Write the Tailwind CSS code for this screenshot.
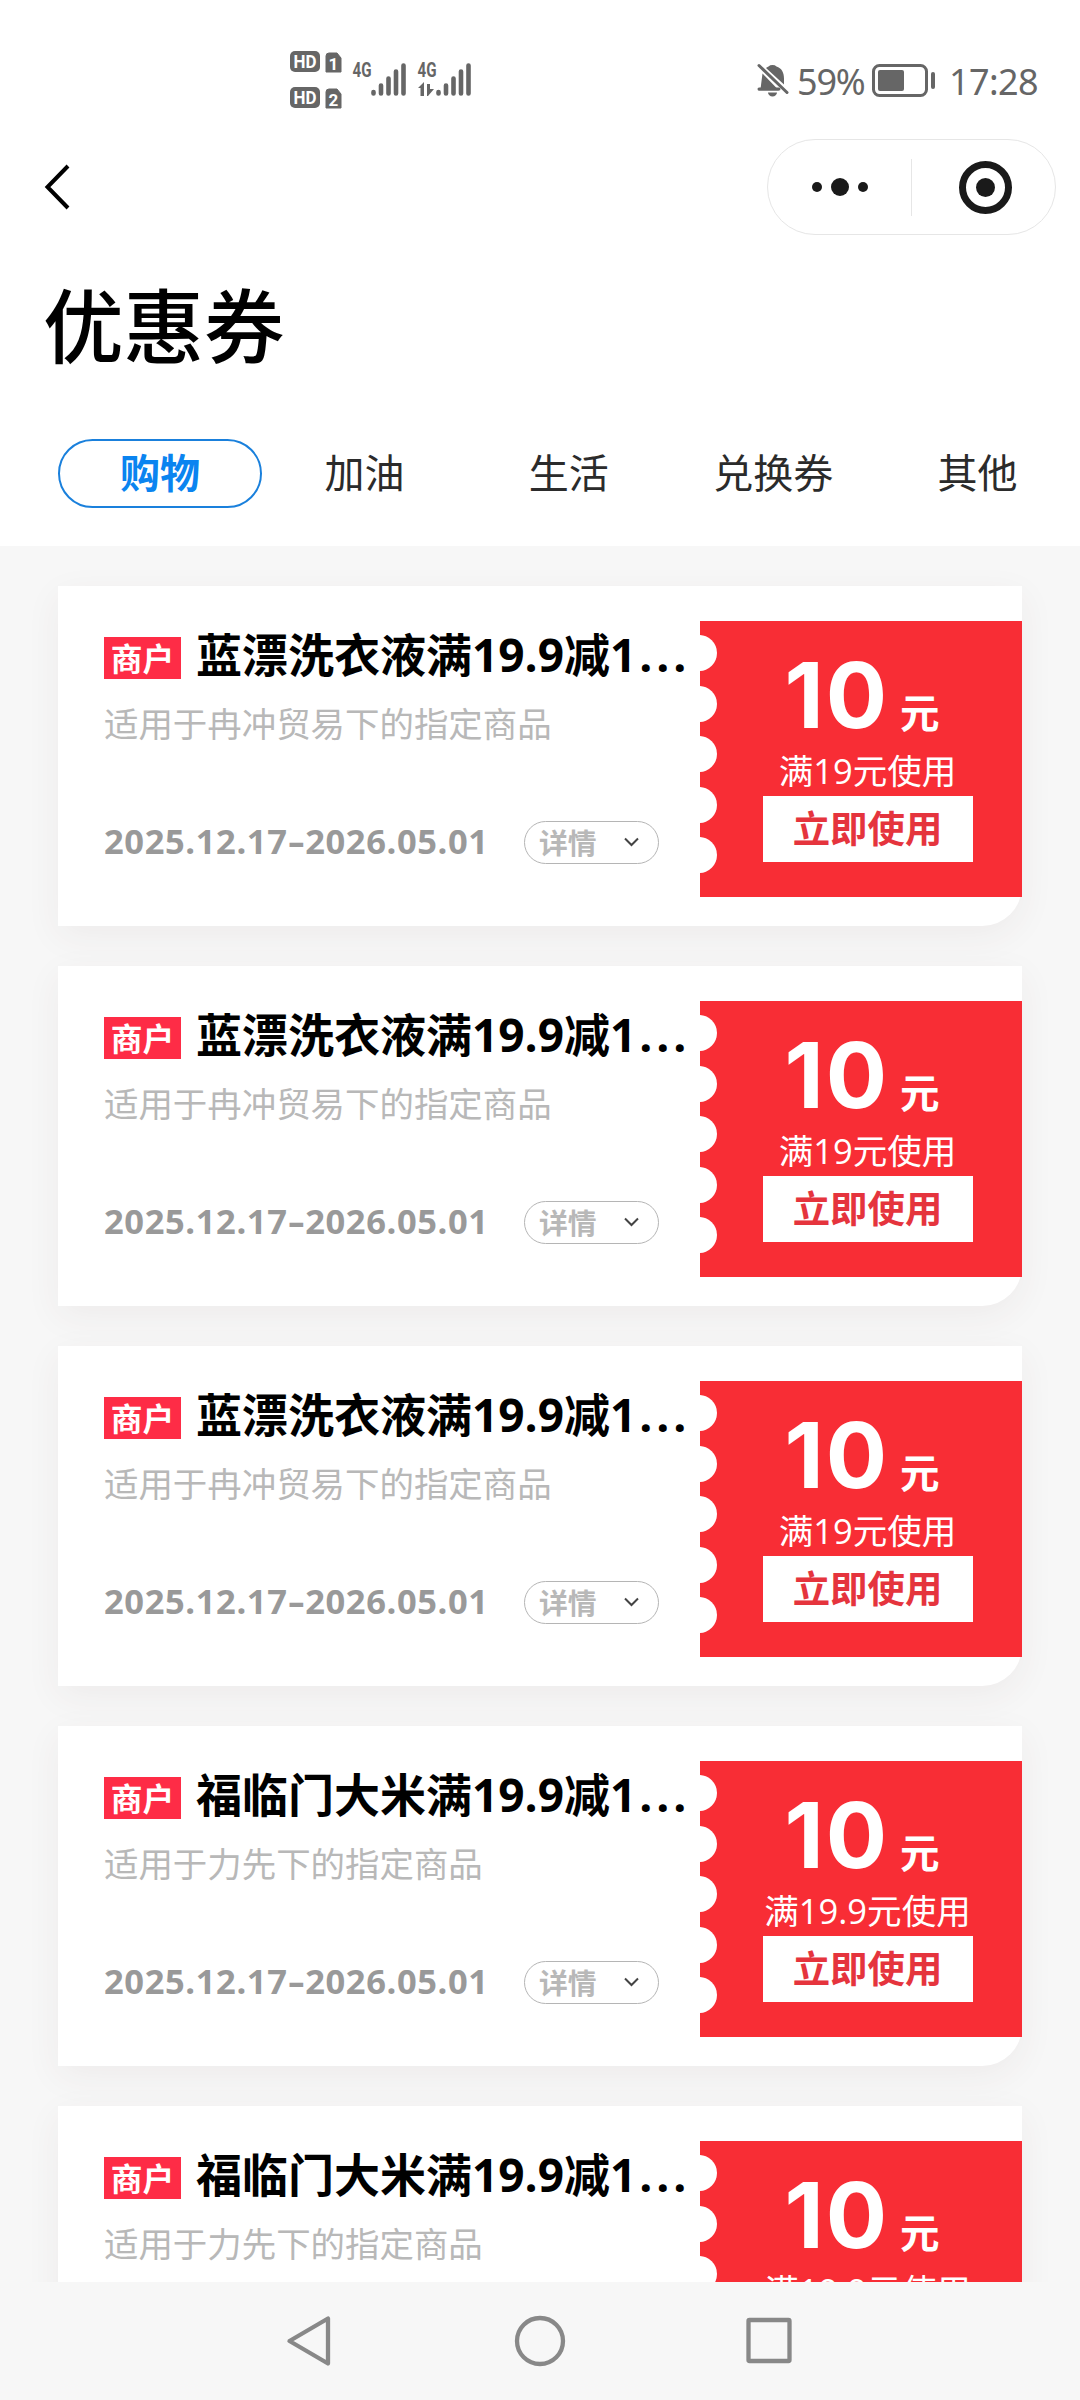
<!DOCTYPE html>
<html lang="zh-CN">
<head>
<meta charset="utf-8">
<title>优惠券</title>
<script src="https://cdn.jsdelivr.net/npm/@tailwindcss/browser@4"></script>
</head>
<body class="w-[1080px] h-[2400px] overflow-hidden bg-[#f7f7f7] font-['Open_Sans','Noto_Sans_CJK_SC',sans-serif] flex flex-col">

<header class="bg-white h-[546px] shrink-0 flex flex-col">
  <!-- status bar -->
  <div class="h-[139px] shrink-0 flex items-start text-[#666]">
    <svg class="ml-[290px] mt-[50px] w-[182px] h-[60px]" viewBox="0 0 182 60" fill="#666">
      <rect x="0" y="1" width="30" height="21" rx="5"/>
      <rect x="0" y="37" width="30" height="21" rx="5"/>
      <path d="M39 3h8l4 5v14h-15V6a3 3 0 0 1 3-3zM39 39h8l4 5v14h-15V42a3 3 0 0 1 3-3z" stroke="#666" stroke-linejoin="round"/>
      <g font-family="Roboto" font-weight="700" fill="#fff">
        <text x="3.500" y="18" font-size="19" textLength="23" lengthAdjust="spacingAndGlyphs">HD</text>
        <text x="3.500" y="54" font-size="19" textLength="23" lengthAdjust="spacingAndGlyphs">HD</text>
        <text x="38.500" y="19.500" font-size="17">1</text>
        <text x="38.500" y="55.500" font-size="17">2</text>
      </g>
      <g font-family="Roboto" font-weight="700" font-size="20">
        <text x="62.500" y="27" textLength="19" lengthAdjust="spacingAndGlyphs">4G</text>
        <text x="127.500" y="27" textLength="19" lengthAdjust="spacingAndGlyphs">4G</text>
      </g>
      <g stroke="#666" stroke-width="4.600" stroke-linecap="round">
        <path d="M83.500 42v1.500M91 35.500v8M98.500 28.500v15M106 21.500v22M113.500 15.500v28"/>
        <path d="M148.500 42v1.500M156 35.500v8M163.500 28.500v15M171 21.500v22M178.500 15.500v28"/>
      </g>
      <path d="M128 38l6-6v14h-3.500V38zM137 34h3v5h4l-6 7h-1z"/>
    </svg>
    <svg class="ml-[284px] mt-[62px] w-[34px] h-[38px]" viewBox="0 0 34 38" fill="#666">
      <path d="M4.500 27 6.500 11.500 23 28.500H2zM12.500 4.500a5 3.500 0 0 1 8 0c5 1.500 7.500 6 7.500 12v6L10 6c.6-.6 1.500-1.200 2.500-1.500zM12 30.500h9a4.500 4 0 0 1-9 0z"/>
      <path d="M3 3.500 31 30.500" stroke="#666" stroke-width="3" stroke-linecap="round"/>
      <path d="M3 27h20" stroke="#666" stroke-width="3" stroke-linecap="round"/>
    </svg>
    <span class="ml-[7px] mt-[56px] w-[69px] text-[36px] leading-[52px] font-normal tracking-[-1.200px] font-['Noto_Sans',sans-serif]">59%</span>
    <svg class="ml-[6px] mt-[64px] w-[64px] h-[34px]" viewBox="0 0 64 34" fill="none">
      <rect x="1.500" y="1.500" width="53" height="30" rx="6" stroke="#666" stroke-width="3"/>
      <rect x="6" y="6" width="26" height="21" rx="2" fill="#666"/>
      <path d="M61 10v13" stroke="#666" stroke-width="4" stroke-linecap="round"/>
    </svg>
    <span class="ml-[13px] mt-[56px] text-[36px] leading-[52px] font-normal tracking-[-0.600px] font-['Noto_Sans',sans-serif]">17:28</span>
  </div>
  <!-- navigation row -->
  <div class="h-[96px] shrink-0 flex items-center justify-between pl-[44px] pr-[24px]">
    <svg class="w-[28px] h-[48px]" viewBox="0 0 28 48" fill="none"><path d="M24 3 3.500 24 24 45" stroke="#000" stroke-width="4"/></svg>
    <div class="w-[289px] h-[96px] rounded-full border border-[#e6e6e6] flex items-center">
      <div class="w-[143px] flex items-center justify-center gap-[9px]">
        <i class="size-[10px] rounded-full bg-[#1a1a1a]"></i>
        <i class="size-[18px] rounded-full bg-[#1a1a1a]"></i>
        <i class="size-[10px] rounded-full bg-[#1a1a1a]"></i>
      </div>
      <div class="w-px h-[57px] bg-[#e6e6e6]"></div>
      <div class="flex-1 flex items-center justify-center pl-[3px]">
        <div class="size-[53px] rounded-full border-[7px] border-[#1a1a1a] flex items-center justify-center"><i class="size-[19px] rounded-full bg-[#1a1a1a]"></i></div>
      </div>
    </div>
  </div>
  <h1 class="mt-[32px] ml-[43px] text-[80.500px] leading-[118px] font-medium text-black">优惠券</h1>
  <nav class="mt-[54px] ml-[58px] flex gap-[6.400px] text-[40px] leading-[67px] text-center text-[#2b2b2b]">
    <a class="w-[204px] h-[69px] -mr-[3px] rounded-full border-2 border-[#1a80dc] text-[#0a84f0] leading-[63px] font-bold">购物</a>
    <a class="w-[198px]">加油</a>
    <a class="w-[198px]">生活</a>
    <a class="w-[198px]">兑换券</a>
    <a class="w-[198px]">其他</a>
  </nav>
</header>

<main id="list" class="flex-1 min-h-0 overflow-hidden pt-[40px] pl-[58px] flex flex-col gap-[40px]"></main>

<footer class="h-[118px] shrink-0 bg-[#f7f7f7] pt-[33px] flex justify-center">
  <svg class="w-[510px] h-[52px]" viewBox="0 0 510 52" fill="none" stroke="#888" stroke-width="4.300" stroke-linejoin="round">
    <path d="M4.500 26 43 3.500v45z"/>
    <circle cx="255" cy="26" r="23"/>
    <rect x="463.500" y="5" width="41" height="41" rx="1"/>
  </svg>
</footer>

<script>
const coupons = [
  ["蓝漂洗衣液满19.9减1", "适用于冉冲贸易下的指定商品", "满19元使用"],
  ["蓝漂洗衣液满19.9减1", "适用于冉冲贸易下的指定商品", "满19元使用"],
  ["蓝漂洗衣液满19.9减1", "适用于冉冲贸易下的指定商品", "满19元使用"],
  ["福临门大米满19.9减1", "适用于力先下的指定商品", "满19.9元使用"],
  ["福临门大米满19.9减1", "适用于力先下的指定商品", "满19.9元使用"],
];
document.getElementById("list").innerHTML = coupons.map(([title, scope, rule]) => `
  <article class="w-[964px] h-[340px] shrink-0 bg-white rounded-br-[40px] shadow-[0_10px_36px_rgba(90,50,50,0.06)] flex">
    <div class="w-[642px] pl-[46px] pt-[38px] flex flex-col">
      <div class="flex items-center h-[60px]">
        <span class="mt-[7px] w-[77px] h-[42px] bg-[#fe2c46] text-white text-[31.700px] leading-[44px] font-bold text-center">商户</span>
        <span class="ml-[15px] text-[46px] leading-[60px] font-bold text-black whitespace-nowrap">${title}<span class="ml-[3px] tracking-[3.800px]">...</span></span>
      </div>
      <p class="mt-[14px] text-[34.450px] leading-[52px] text-[#b8b8b8]">${scope}</p>
      <div class="mt-[70px] flex items-center h-[44px]">
        <span class="w-[420px] pb-[3px] text-[34.500px] leading-[41px] font-bold text-[#999] tracking-[0.600px]">2025.12.17<span class="inline-block mx-[3px] scale-x-150">-</span>2026.05.01</span>
        <span class="w-[135px] h-[43px] rounded-full border border-[#b5b5b5] flex items-center pl-[14px] text-[28.800px] leading-[41px] font-bold text-[#b8b8b8]">详情
          <svg class="ml-[27px] w-[15px] h-[10px]" viewBox="0 0 15 10" fill="none"><path d="M1 1.500l6.500 6.500L14 1.500" stroke="#444" stroke-width="2"/></svg>
        </span>
      </div>
    </div>
    <div class="relative overflow-hidden mt-[35px] w-[322px] h-[276px] bg-[#f82d35] text-white flex flex-col items-center pl-[13px]">
      <div class="absolute left-[-19px] top-[14px] flex flex-col gap-[14.500px]">
        <i class="size-[36px] rounded-full bg-white"></i>
        <i class="size-[36px] rounded-full bg-white"></i>
        <i class="size-[36px] rounded-full bg-white"></i>
        <i class="size-[36px] rounded-full bg-white"></i>
        <i class="size-[36px] rounded-full bg-white"></i>
      </div>
      <div class="mt-[28px] h-[96px] flex items-baseline pr-[11px]">
        <span class="text-[91px] leading-[92px] font-bold font-['Inter',sans-serif] tracking-[2px]">10</span>
        <span class="ml-[11px] text-[39.500px] leading-[50px] font-bold">元</span>
      </div>
      <p class="text-[34.560px] leading-[51px]">${rule}</p>
      <button class="w-[210px] h-[66px] bg-white text-[#e5343d] text-[37.400px] leading-[64px] font-bold">立即使用</button>
    </div>
  </article>`).join("");
</script>
</body>
</html>
